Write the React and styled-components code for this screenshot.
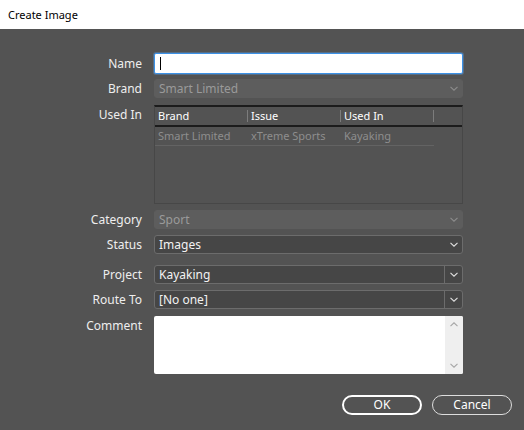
import React from 'react';
import styled, { createGlobalStyle } from 'styled-components';

const GlobalStyle = createGlobalStyle`
    html, body {
        margin: 0;
        padding: 0;
        background: #535353;
    }
    body {
        font-family: 'Noto Sans', 'Open Sans', 'Liberation Sans', sans-serif;
        font-size: 12px;
    }
`;

const Window = styled.div`
    width: 524px;
    height: 430px;
    display: flex;
    flex-direction: column;
    overflow: hidden;
`;

const TitleBar = styled.div`
    height: 29px;
    flex: none;
    background: #ffffff;
    color: #000;
    display: flex;
    align-items: center;
    padding-left: 8px;
    padding-bottom: 1px;
    box-sizing: border-box;
    font-size: 11px;
`;

const Body = styled.div`
    flex: 1;
    background: #535353;
    padding-top: 24px;
    display: flex;
    flex-direction: column;
`;

const Row = styled.div`
    display: grid;
    grid-template-columns: 142px 309px;
    column-gap: 12px;
    margin-top: ${(p) => p.$gap || 0}px;
`;

const Label = styled.div`
    text-align: right;
    color: #eeeeee;
    line-height: 19px;
    height: 19px;
    padding-top: ${(p) => p.$top || 0}px;
`;

const TextInput = styled.div`
    height: 21px;
    box-sizing: border-box;
    background: #fff;
    border: 1px solid #3c91e6;
    box-shadow: 0 0 0 1px rgba(90, 160, 235, 0.35);
    border-radius: 2px;
    display: flex;
    align-items: center;
    padding-left: 5px;
`;

const Caret = styled.span`
    width: 1px;
    height: 13px;
    background: #000;
`;

const SelectBox = styled.div`
    height: 19px;
    box-sizing: border-box;
    display: flex;
    align-items: center;
    border-radius: 3px;
    background: ${(p) => (p.$disabled ? '#5d5d5d' : '#464646')};
    border: 1px solid ${(p) => (p.$disabled ? '#5d5d5d' : '#6c6c6c')};
    color: ${(p) => (p.$disabled ? '#9a9a9a' : '#f2f2f2')};
`;

const SelectValue = styled.span`
    flex: 1;
    padding-left: 4px;
    white-space: nowrap;
    line-height: 17px;
`;

const ArrowPart = styled.span`
    width: 17px;
    height: 100%;
    display: flex;
    align-items: center;
    justify-content: center;
    border-left: 1px solid ${(p) => (p.$split ? '#6c6c6c' : 'transparent')};
`;

const Chevron = ({ color = '#ddd', size = 8 }) => (
    <svg width={size} height={size / 2 + 1} viewBox="0 0 8 5">
        <path d="M0.5 0.8 L4 4.2 L7.5 0.8" fill="none" stroke={color} strokeWidth="1.1" />
    </svg>
);

const Select = ({ value, disabled, split }) => (
    <SelectBox $disabled={disabled}>
        <SelectValue>{value}</SelectValue>
        <ArrowPart $split={split}>
            <Chevron color={disabled ? '#8c8c8c' : '#e0e0e0'} />
        </ArrowPart>
    </SelectBox>
);

const Table = styled.div`
    height: 99px;
    box-sizing: border-box;
    border: 1px solid #474747;
    border-top: 2px solid #1c1c1c;
    font-size: 11px;
`;

const TableHead = styled.div`
    display: grid;
    grid-template-columns: 93px 93px 93px;
    height: 18px;
    border-bottom: 2px solid #1c1c1c;
    color: #ffffff;
`;

const HeadCell = styled.div`
    position: relative;
    padding-left: 3px;
    line-height: 17px;
    &::after {
        content: '';
        position: absolute;
        right: 0;
        top: 3px;
        height: 12px;
        width: 1px;
        background: #7c7c7c;
    }
`;

const TableRow = styled.div`
    display: grid;
    grid-template-columns: 93px 93px 93px;
    width: 279px;
    height: 18px;
    border-bottom: 1px solid #636363;
    color: #8e8e8e;
`;

const Cell = styled.div`
    padding-left: 3px;
    line-height: 17px;
    white-space: nowrap;
`;

const TextArea = styled.div`
    height: 58px;
    box-sizing: border-box;
    background: #fff;
    border-radius: 2px;
    display: flex;
    justify-content: flex-end;
    overflow: hidden;
`;

const ScrollTrack = styled.div`
    width: 18px;
    background: #efefef;
    display: flex;
    flex-direction: column;
    justify-content: space-between;
    align-items: center;
    padding: 6px 0;
`;

const Footer = styled.div`
    display: flex;
    justify-content: flex-end;
    gap: 10px;
    padding-right: 12px;
    margin-top: 21px;
`;

const Button = styled.button`
    width: 80px;
    height: 20px;
    box-sizing: border-box;
    border-radius: 10px;
    background: transparent;
    border: ${(p) => (p.$primary ? '2px solid #ffffff' : '1px solid #dddddd')};
    color: #ffffff;
    font-family: inherit;
    font-size: 12px;
    padding: 0;
    line-height: 16px;
`;

export default function App() {
    return (
        <Window>
            <GlobalStyle />
            <TitleBar>Create Image</TitleBar>
            <Body>
                <Row>
                    <Label $top={1}>Name</Label>
                    <TextInput>
                        <Caret />
                    </TextInput>
                </Row>
                <Row $gap={5}>
                    <Label>Brand</Label>
                    <Select value="Smart Limited" disabled />
                </Row>
                <Row $gap={7}>
                    <Label>Used In</Label>
                    <Table>
                        <TableHead>
                            <HeadCell>Brand</HeadCell>
                            <HeadCell>Issue</HeadCell>
                            <HeadCell>Used In</HeadCell>
                        </TableHead>
                        <TableRow>
                            <Cell>Smart Limited</Cell>
                            <Cell>xTreme Sports</Cell>
                            <Cell>Kayaking</Cell>
                        </TableRow>
                    </Table>
                </Row>
                <Row $gap={6}>
                    <Label>Category</Label>
                    <Select value="Sport" disabled />
                </Row>
                <Row $gap={6}>
                    <Label>Status</Label>
                    <Select value="Images" />
                </Row>
                <Row $gap={11}>
                    <Label>Project</Label>
                    <Select value="Kayaking" split />
                </Row>
                <Row $gap={6}>
                    <Label>Route To</Label>
                    <Select value="[No one]" split />
                </Row>
                <Row $gap={7}>
                    <Label>Comment</Label>
                    <TextArea>
                        <ScrollTrack>
                            <svg width="8" height="5" viewBox="0 0 8 5">
                                <path d="M0.5 4.2 L4 0.8 L7.5 4.2" fill="none" stroke="#a6a6a6" strokeWidth="1.1" />
                            </svg>
                            <Chevron color="#a6a6a6" />
                        </ScrollTrack>
                    </TextArea>
                </Row>
                <Footer>
                    <Button $primary>OK</Button>
                    <Button>Cancel</Button>
                </Footer>
            </Body>
        </Window>
    );
}
